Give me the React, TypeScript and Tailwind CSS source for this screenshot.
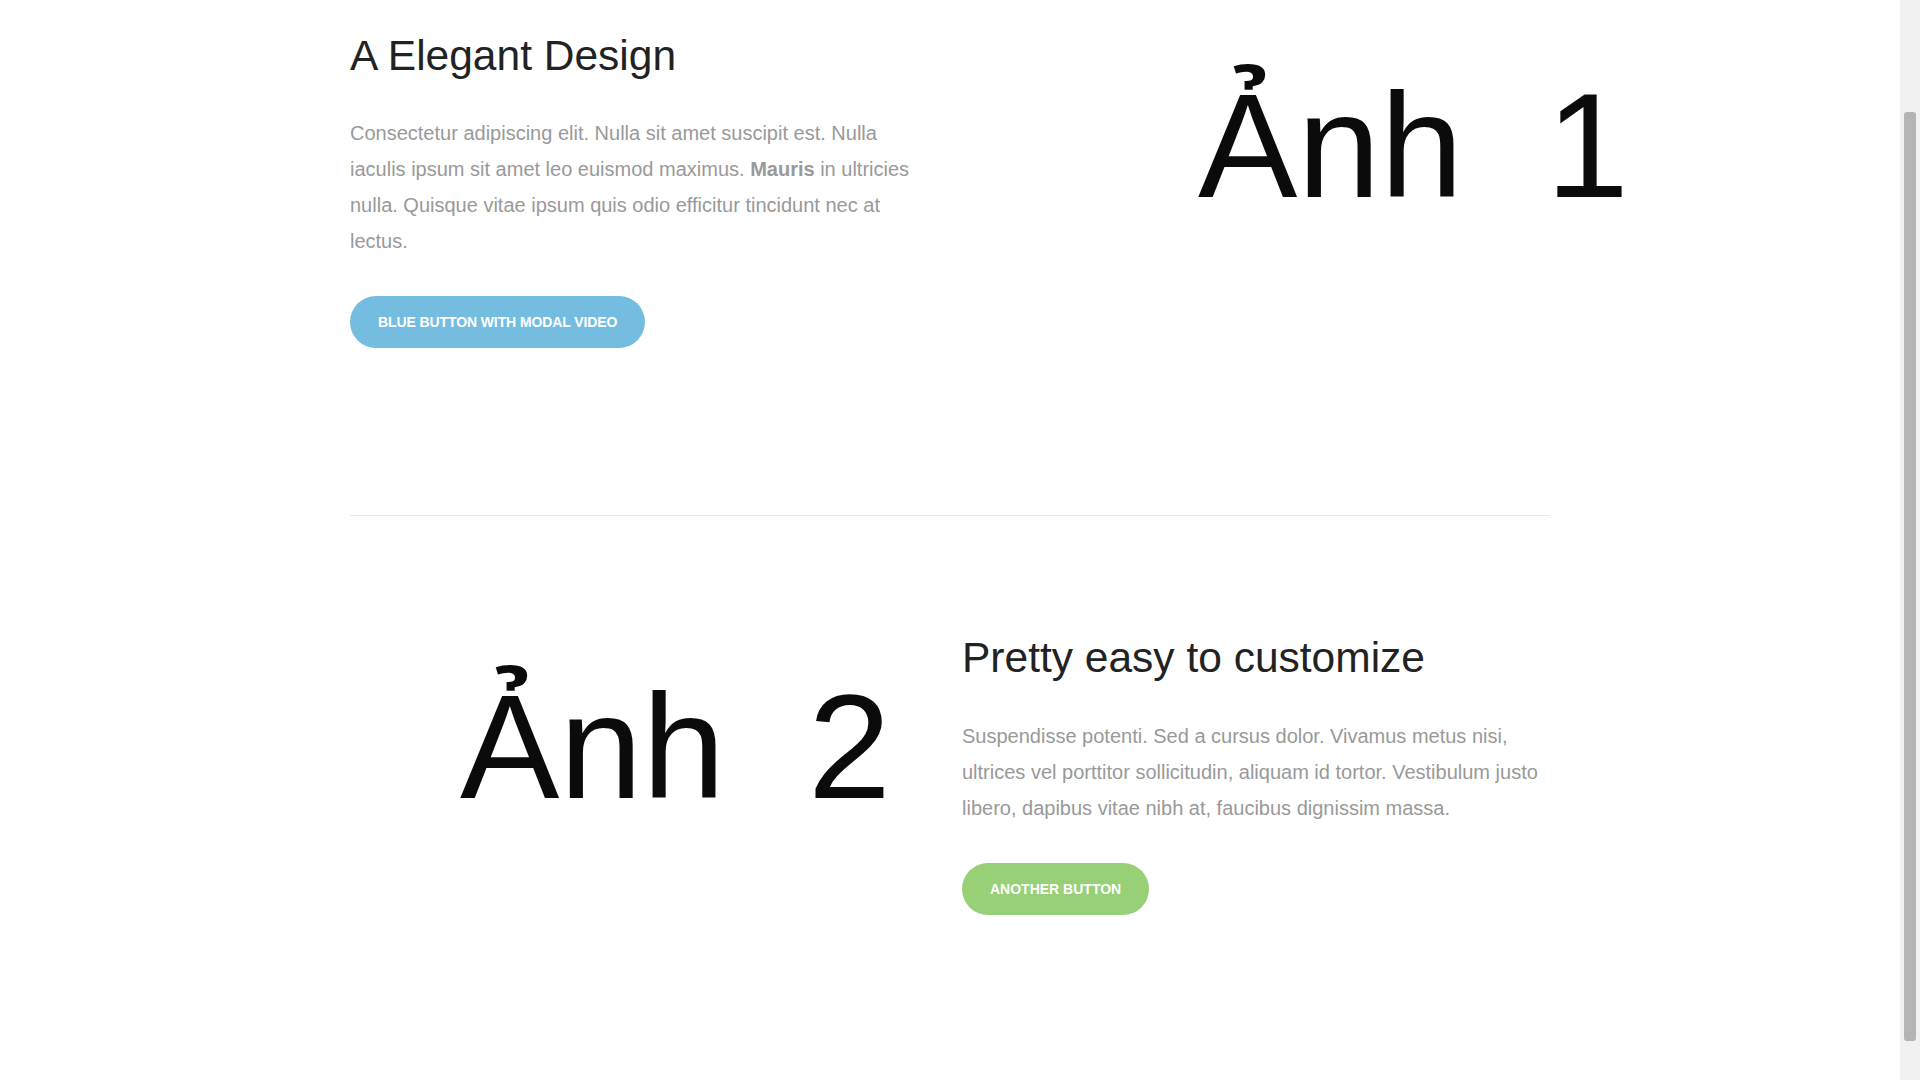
import React from "react";

export default function App() {
  return (
    <div className="flex h-[1080px] w-[1920px] overflow-hidden bg-white font-['Liberation_Sans',Arial,sans-serif]">
      <main className="flex-1">
        <div className="mx-auto w-[1200px]">
          <section className="grid grid-cols-[588px_588px] gap-x-6 pt-[31px] pb-[167px]">
            <div className="flex flex-col items-start">
              <h2 className="text-[42.5px] leading-[50px] text-[#222222]">A Elegant Design</h2>
              <p className="mt-[34px] text-[20px] leading-[36px] text-[#999999]">
                Consectetur adipiscing elit. Nulla sit amet suscipit est. Nulla iaculis ipsum sit amet leo euismod
                maximus. <strong className="font-bold">Mauris</strong> in ultricies nulla. Quisque vitae ipsum quis odio
                efficitur tincidunt nec at lectus.
              </p>
              <button className="mt-[37px] flex h-[52px] items-center rounded-full bg-[#75bde0] px-7 text-[14px] font-bold uppercase tracking-[-0.1px] text-white">
                Blue button with modal video
              </button>
            </div>
            <div className="pt-[40px] pl-[236px]">
              <div className="whitespace-pre text-[149px] leading-[150px] text-[#0b0b0b]">{"Ảnh  1"}</div>
            </div>
          </section>
          <hr className="border-0 border-t border-[#e8e8e8]" />
          <section className="grid grid-cols-[588px_588px] gap-x-6 pt-[117px]">
            <div className="pt-[39px] pl-[110px]">
              <div className="whitespace-pre text-[149px] leading-[150px] text-[#0b0b0b]">{"Ảnh  2"}</div>
            </div>
            <div className="flex flex-col items-start">
              <h2 className="text-[42.5px] leading-[50px] text-[#222222]">Pretty easy to customize</h2>
              <p className="mt-[35px] text-[20px] leading-[36px] text-[#999999]">
                Suspendisse potenti. Sed a cursus dolor. Vivamus metus nisi, ultrices vel porttitor sollicitudin, aliquam
                id tortor. Vestibulum justo libero, dapibus vitae nibh at, faucibus dignissim massa.
              </p>
              <button className="mt-[37px] flex h-[52px] items-center rounded-full bg-[#97d077] px-7 text-[14px] font-bold uppercase text-white">
                Another button
              </button>
            </div>
          </section>
        </div>
      </main>
      <aside className="w-5 bg-[#f1f1f1] pt-[112px]">
        <div className="mx-1 h-[929px] rounded-[3px] bg-[#b4b4b4]" />
      </aside>
    </div>
  );
}
